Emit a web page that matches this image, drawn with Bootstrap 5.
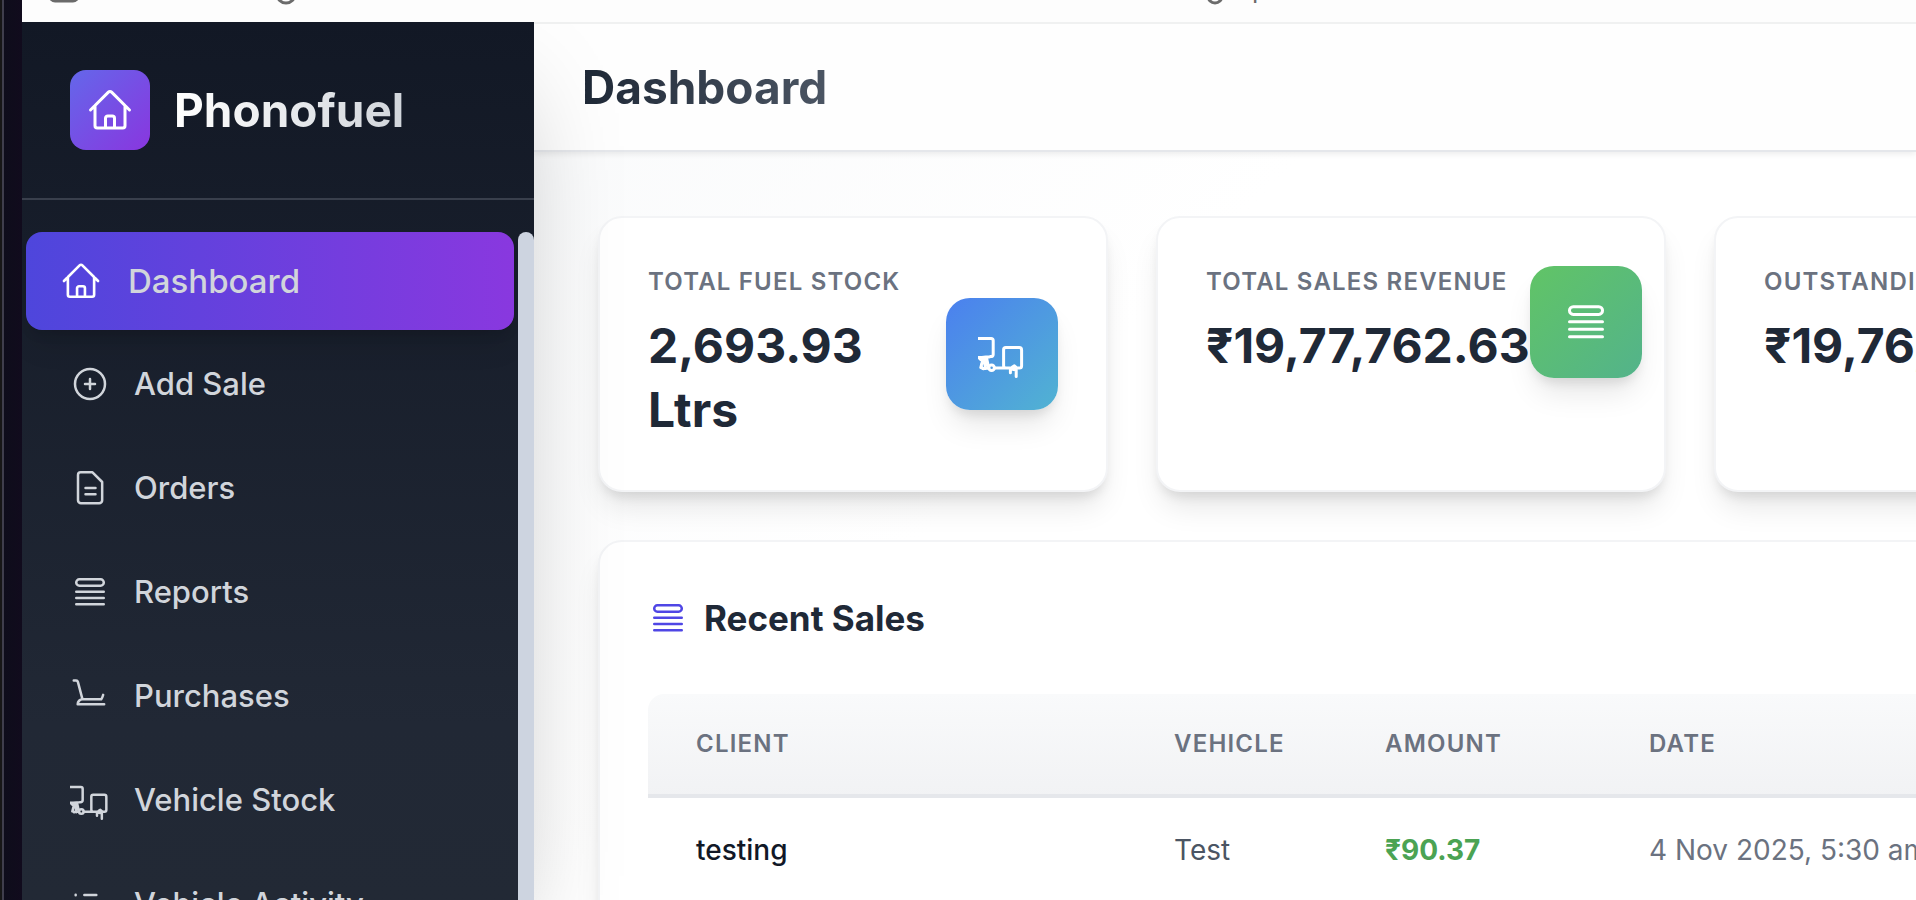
<!DOCTYPE html>
<html lang="en">
<head>
<meta charset="utf-8">
<meta name="viewport" content="width=device-width, initial-scale=1">
<title>Phonofuel Dashboard</title>
<link rel="stylesheet" href="https://cdn.jsdelivr.net/npm/bootstrap@5.3.0/dist/css/bootstrap.min.css">
<style>
  body { font-family: Inter, "Liberation Sans", sans-serif; background: #0f0c1c; color: #1f2937; }
  .desk-edge { width: 22px; background: linear-gradient(90deg, #171717 0 2px, #3f3e4c 2px 4px, #0e0d1b 4px, #110b1d); }
  .browser-bar { height: 22px; background: #fdfdfd; color: #6b6b6b; }
  .browser-tools { margin-top: -31px; height: 40px; font-size: 26px; line-height: 40px; }
  .tool-left { padding-left: 26px; gap: 188px; }
  .tool-left svg { margin-top: 4px; }
  .address { margin-left: 900px; gap: 24px; }
  .icon { fill: none; stroke: currentColor; stroke-width: 1.5; stroke-linecap: round; stroke-linejoin: round; width: 40px; height: 40px; flex-shrink: 0; }
  .icon-lg { width: 48px; height: 48px; }
  .sidebar { width: 512px; background: linear-gradient(180deg, #121825, #212835 80%, #222935); color: #d1d5db; position: relative; z-index: 2; box-shadow: 0 50px 100px -24px rgba(0,0,0,.25); }
  .brand { padding: 48px; gap: 24px; border-bottom: 2px solid #393f4c; }
  .brand-mark { width: 80px; height: 80px; border-radius: 16px; color: #fff; background: linear-gradient(135deg, #6467ea, #8936df); }
  .brand-name { font-size: 46px; line-height: 64px; font-weight: 700; background: linear-gradient(90deg, #fff, #d1d5db); -webkit-background-clip: text; background-clip: text; color: transparent; }
  .side-scroll { margin-top: 32px; overflow: hidden; }
  .side-menu { padding: 0 16px; gap: 8px; }
  .side-link { height: 96px; padding: 0 32px; gap: 24px; border-radius: 24px; font-size: 31px; line-height: 48px; font-weight: 500; color: #d1d5db; text-decoration: none; }
  .side-link.active { height: 98px; margin: 0 -12px -2px; padding: 0 34px; gap: 26px; border-radius: 16px; font-size: 33px; background: linear-gradient(90deg, #4e46dc, #8938df); box-shadow: 0 20px 30px -6px rgba(0,0,0,.1), 0 8px 12px -4px rgba(0,0,0,.1); }
  .side-link.active .icon { width: 42px; height: 42px; color: #fff; }
  .scroll-thumb { width: 16px; border-radius: 8px 8px 0 0; background: #cdd4e0; flex-shrink: 0; }
  .workspace { min-width: 0; background: linear-gradient(135deg, #f9fafb, #fff 40%); }
  .topbar { height: 130px; padding: 0 48px; background: #fefefe; border-top: 2px solid #f0f1f1; border-bottom: 2px solid #e5e7eb; box-shadow: 0 2px 6px rgba(0,0,0,.08); }
  .page-name { font-size: 46px; line-height: 64px; font-weight: 700; margin: 0; background: linear-gradient(90deg, #1f2937, #4b5563); -webkit-background-clip: text; background-clip: text; color: transparent; }
  .content-area { padding: 64px; }
  .board { width: 2184px; }
  .stats { grid-template-columns: repeat(4, minmax(0, 1fr)); gap: 48px; }
  .panel { background: #fff; border: 2px solid #f3f4f6; border-radius: 24px; padding: 48px; box-shadow: 0 20px 30px -6px rgba(0,0,0,.1), 0 8px 12px -4px rgba(0,0,0,.1); }
  .caption { font-size: 24px; line-height: 32px; font-weight: 600; letter-spacing: 1.2px; color: #6b7280; text-transform: uppercase; }
  .figure-value { font-size: 48px; line-height: 64px; font-weight: 700; margin: 16px 0 0; }
  .tile { width: 112px; height: 112px; border-radius: 24px; color: #fff; flex-shrink: 0; box-shadow: 0 20px 30px -6px rgba(0,0,0,.1), 0 8px 12px -4px rgba(0,0,0,.1); }
  .tile-blue { background: linear-gradient(135deg, #4b80ef, #51b3d2); }
  .tile-green { background: linear-gradient(135deg, #61c466, #53b38b); }
  .tile-red { background: linear-gradient(135deg, #ef4444, #ec4899); }
  .section-name { font-size: 35px; line-height: 56px; font-weight: 700; margin: 0 0 48px; gap: 16px; }
  .section-name .icon { color: #4f46e5; }
  .sales { table-layout: fixed; border-collapse: separate; border-spacing: 0; border-radius: 16px 16px 0 0; overflow: hidden; font-size: 28px; line-height: 40px; }
  .sales thead { background: linear-gradient(180deg, #f9fafb, #f1f2f4); }
  .sales th { padding: 34px 48px; border-bottom: 4px solid #e5e7eb; }
  .sales td { padding: 32px 48px; color: #6b7280; }
  .sales .client { color: #111827; font-weight: 500; }
  .sales .vehicle { color: #4b5563; }
  .sales .amount { color: #4ba353; font-weight: 700; }
  .c-client { width: 478px; } .c-vehicle { width: 211px; } .c-amount { width: 264px; }
</style>
<script src="https://cdn.jsdelivr.net/npm/bootstrap@5.3.0/dist/js/bootstrap.bundle.min.js"></script>
</head>
<body>
<svg class="d-none">
  <symbol id="i-home" viewBox="0 0 24 24"><path d="m2.25 12 8.95-8.95a1.13 1.13 0 0 1 1.6 0L21.75 12M4.5 9.75v10.13c0 .62.5 1.12 1.13 1.12h12.75c.62 0 1.12-.5 1.12-1.12V9.75M9.75 21v-4.88c0-.62.5-1.12 1.13-1.12h2.25c.62 0 1.12.5 1.12 1.12V21"/></symbol>
  <symbol id="i-plus" viewBox="0 0 24 24"><circle cx="12" cy="12" r="9"/><path d="M12 9v6M9 12h6"/></symbol>
  <symbol id="i-doc" viewBox="0 0 24 24"><path d="M6.4 2.6h7.1L19.3 8.4v11a1.8 1.8 0 0 1-1.8 1.8H6.6a1.8 1.8 0 0 1-1.8-1.8V4.2c0-.9.7-1.6 1.6-1.6ZM9.3 12h6M9.3 15.8h6"/></symbol>
  <symbol id="i-list" viewBox="0 0 24 24"><path d="M3.75 11.9h16.5M3.75 15.6h16.5M3.75 19.4h16.5M5.63 4.4h12.75a1.9 1.9 0 0 1 0 3.8H5.63a1.9 1.9 0 0 1 0-3.8Z"/></symbol>
  <symbol id="i-cart" viewBox="0 0 24 24"><path d="M2.25 2.7h1.4c.5 0 .95.35 1.08.84L7.5 14M19.9 11.3c-.3 1.1-.5 1.9-1.2 2.7H7.5a2.9 2.9 0 0 0-2.9 2.9h15.9"/></symbol>
  <symbol id="i-truck" viewBox="0 0 24 24"><path d="M-1 4.2H6.5a1.1 1.1 0 0 1 1.1 1.1v6.9c0 .8-.5 1.1-1.4 1.1-1.2.5-2.6 0-4.2.4H-1M1 14.5l1.3.8-.9 3.5M3 14.5l.8 4.8M2.8 15.5c-2 2-1 4.2.2 3.8s.3-2.5.8-3.8M4.4 14.5l1 4.6H3M8.2 19H14M13.9 8.8h6.7a1.2 1.2 0 0 1 1.2 1.2v8c0 .6-.5 1-1.1 1h-6.8a1.1 1.1 0 0 1-1.1-1.1V9.9c0-.6.5-1.1 1.1-1.1ZM16.2 19v2.4M17.2 18.5l1-.6 1.1 1M17.3 19.6l1.8.4v3.2"/><circle cx="6.8" cy="18.9" r="1.4"/></symbol>
  <symbol id="i-bullets" viewBox="0 0 24 24"><path d="M8.6 6.6h7.2M3.4 6.5v.2M8.6 12h7.2M3.4 12v.1M8.6 17.4h7.2M3.4 17.3v.2"/></symbol>
</svg>

<div class="d-flex vh-100 overflow-hidden">
  <div class="desk-edge flex-shrink-0"></div>
  <div class="d-flex flex-column flex-grow-1 overflow-hidden">
    <div class="browser-bar flex-shrink-0 overflow-hidden">
      <div class="browser-tools d-flex text-nowrap">
        <div class="tool-left d-flex" aria-hidden="true">
          <svg width="32" height="30" fill="none" stroke="currentColor" stroke-width="3"><rect x="2" y="2" width="28" height="26" rx="5" fill="#b5b5b5"/><path d="M13 2v26"/></svg>
          <svg width="36" height="36" fill="none" stroke="currentColor" stroke-width="3"><circle cx="18" cy="21" r="9"/></svg>
        </div>
        <div class="address d-flex">
          <svg width="24" height="40" fill="none" stroke="currentColor" stroke-width="3" aria-hidden="true"><circle cx="11" cy="27" r="7"/></svg>
          <span>phonofuel-admin.onrender.com</span>
        </div>
      </div>
    </div>

    <div class="d-flex flex-grow-1 overflow-hidden">
      <aside class="sidebar d-flex flex-column flex-shrink-0">
        <div class="brand d-flex align-items-center">
          <div class="brand-mark d-flex align-items-center justify-content-center"><svg class="icon icon-lg"><use href="#i-home"/></svg></div>
          <span class="brand-name">Phonofuel</span>
        </div>
        <div class="side-scroll d-flex flex-grow-1">
          <nav class="side-menu d-flex flex-column flex-grow-1">
            <a href="#" class="side-link active d-flex align-items-center flex-shrink-0" aria-current="page"><svg class="icon"><use href="#i-home"/></svg>Dashboard</a>
            <a href="#" class="side-link d-flex align-items-center flex-shrink-0"><svg class="icon"><use href="#i-plus"/></svg>Add Sale</a>
            <a href="#" class="side-link d-flex align-items-center flex-shrink-0"><svg class="icon"><use href="#i-doc"/></svg>Orders</a>
            <a href="#" class="side-link d-flex align-items-center flex-shrink-0"><svg class="icon"><use href="#i-list"/></svg>Reports</a>
            <a href="#" class="side-link d-flex align-items-center flex-shrink-0"><svg class="icon"><use href="#i-cart"/></svg>Purchases</a>
            <a href="#" class="side-link d-flex align-items-center flex-shrink-0"><svg class="icon"><use href="#i-truck"/></svg>Vehicle Stock</a>
            <a href="#" class="side-link d-flex align-items-center flex-shrink-0"><svg class="icon"><use href="#i-bullets"/></svg>Vehicle Activity</a>
          </nav>
          <div class="scroll-thumb"></div>
        </div>
      </aside>

      <main class="workspace flex-grow-1 overflow-hidden">
        <header class="topbar d-flex align-items-center position-relative">
          <h1 class="page-name">Dashboard</h1>
        </header>
        <div class="content-area">
          <div class="board">
            <section class="stats d-grid mb-5">
              <article class="panel">
                <div class="d-flex align-items-center justify-content-between">
                  <div><div class="caption">Total Fuel Stock</div><p class="figure-value">2,693.93 Ltrs</p></div>
                  <div class="tile tile-blue d-flex align-items-center justify-content-center"><svg class="icon icon-lg"><use href="#i-truck"/></svg></div>
                </div>
              </article>
              <article class="panel">
                <div class="d-flex align-items-center justify-content-between">
                  <div><div class="caption">Total Sales Revenue</div><p class="figure-value">₹19,77,762.63</p></div>
                  <div class="tile tile-green d-flex align-items-center justify-content-center"><svg class="icon icon-lg"><use href="#i-list"/></svg></div>
                </div>
              </article>
              <article class="panel">
                <div class="d-flex align-items-center justify-content-between">
                  <div><div class="caption">Outstanding</div><p class="figure-value">₹19,76,762.63</p></div>
                  <div class="tile tile-red"></div>
                </div>
              </article>
            </section>
            <section class="panel">
              <h2 class="section-name d-flex align-items-center"><svg class="icon"><use href="#i-list"/></svg>Recent Sales</h2>
              <table class="sales w-100">
                <colgroup><col class="c-client"><col class="c-vehicle"><col class="c-amount"><col></colgroup>
                <thead><tr><th class="caption" scope="col">Client</th><th class="caption" scope="col">Vehicle</th><th class="caption" scope="col">Amount</th><th class="caption" scope="col">Date</th></tr></thead>
                <tbody><tr><td class="client">testing</td><td class="vehicle">Test</td><td class="amount">₹90.37</td><td>4 Nov 2025, 5:30 am</td></tr></tbody>
              </table>
            </section>
          </div>
        </div>
      </main>
    </div>
  </div>
</div>
</body>
</html>
